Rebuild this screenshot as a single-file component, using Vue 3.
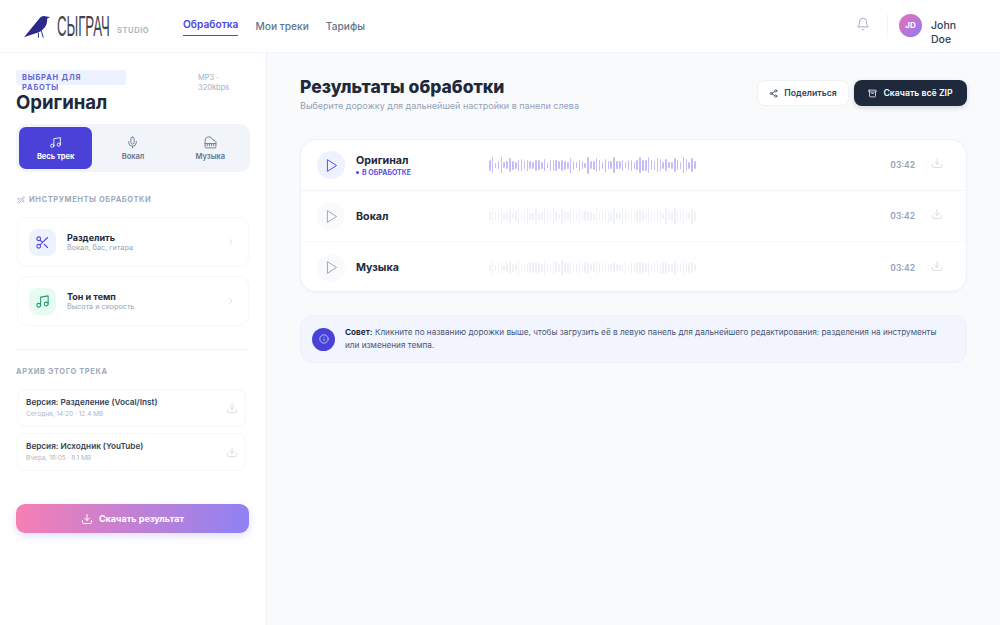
<script setup>
import { computed } from 'vue';

// small seeded generator so the waveforms stay the same on every load
function bars(seed, count) {
    let x = seed;
    const out = [];
    for (let i = 0; i < count; i++) {
        x = (x * 9301 + 49297) % 233280;
        const r = x / 233280;
        out.push(Math.round(5 + r * 7 + (i % 3 === 1 ? 5 : 0)));
    }
    return out;
}

const tabs = [
    { label: 'Весь трек', icon: 'i-music', active: true },
    { label: 'Вокал', icon: 'i-mic' },
    { label: 'Музыка', icon: 'i-piano' }
];

const tools = [
    { title: 'Разделить', sub: 'Вокал, бас, гитара', icon: 'i-scissors', tone: 'violet' },
    { title: 'Тон и темп', sub: 'Высота и скорость', icon: 'i-music', tone: 'green' }
];

const archive = [
    { title: 'Версия: Разделение (Vocal/Inst)', sub: 'Сегодня, 14:20 · 12.4 MB' },
    { title: 'Версия: Исходник (YouTube)', sub: 'Вчера, 18:05 · 8.1 MB' }
];

const tracks = computed(() => [
    { name: 'Оригинал', active: true, wave: bars(17, 72) },
    { name: 'Вокал', active: false, wave: bars(431, 72) },
    { name: 'Музыка', active: false, wave: bars(902, 72) }
]);
</script>

<template>
    <svg class="defs" aria-hidden="true">
        <symbol id="i-music" viewBox="0 0 24 24"><path d="M9 18V5l12-2v13" /><circle cx="6" cy="18" r="3" /><circle cx="18" cy="16" r="3" /></symbol>
        <symbol id="i-mic" viewBox="0 0 24 24"><path d="M12 2a3 3 0 0 0-3 3v7a3 3 0 0 0 6 0V5a3 3 0 0 0-3-3Z" /><path d="M19 10v2a7 7 0 0 1-14 0v-2" /><path d="M12 19v3" /></symbol>
        <symbol id="i-piano" viewBox="0 0 24 24"><path d="M18.5 8c-1.4 0-2.6-.8-3.2-2A6.87 6.87 0 0 0 2 9v11a2 2 0 0 0 2 2h16a2 2 0 0 0 2-2v-8.5C22 9.6 20.4 8 18.5 8" /><path d="M2 14h20M6 14v4M10 14v4M14 14v4M18 14v4" /></symbol>
        <symbol id="i-scissors" viewBox="0 0 24 24"><circle cx="6" cy="6" r="3" /><path d="M8.12 8.12 12 12M20 4 8.12 15.88" /><circle cx="6" cy="18" r="3" /><path d="M14.8 14.8 20 20" /></symbol>
        <symbol id="i-chevron" viewBox="0 0 24 24"><path d="m9 18 6-6-6-6" /></symbol>
        <symbol id="i-download" viewBox="0 0 24 24"><path d="M21 15v4a2 2 0 0 1-2 2H5a2 2 0 0 1-2-2v-4" /><path d="m7 10 5 5 5-5M12 15V3" /></symbol>
        <symbol id="i-bell" viewBox="0 0 24 24"><path d="M6 8a6 6 0 0 1 12 0c0 7 3 9 3 9H3s3-2 3-9" /><path d="M10.3 21a1.94 1.94 0 0 0 3.4 0" /></symbol>
        <symbol id="i-share" viewBox="0 0 24 24"><circle cx="18" cy="5" r="3" /><circle cx="6" cy="12" r="3" /><circle cx="18" cy="19" r="3" /><path d="m8.59 13.51 6.83 3.98M15.41 6.51l-6.82 3.98" /></symbol>
        <symbol id="i-archive" viewBox="0 0 24 24"><rect x="2" y="3" width="20" height="5" rx="1" /><path d="M4 8v11a2 2 0 0 0 2 2h12a2 2 0 0 0 2-2V8M10 12h4" /></symbol>
        <symbol id="i-play" viewBox="0 0 24 24"><path d="M6 3 20 12 6 21Z" /></symbol>
        <symbol id="i-info" viewBox="0 0 24 24"><circle cx="12" cy="12" r="10" /><path d="M12 16v-4M12 8h.01" /></symbol>
        <symbol id="i-wand" viewBox="0 0 24 24"><path d="M21.6 3.6 20.4 2.4a1.2 1.2 0 0 0-1.7 0L2.4 18.6a1.2 1.2 0 0 0 0 1.7l1.3 1.3a1.2 1.2 0 0 0 1.7 0L21.6 5.400a1.2 1.2 0 0 0 0-1.800Z" /><path d="m14 7 3 3M5 6v4M19 14v4M3 8h4M17 16h4" /></symbol>
    </svg>

    <div class="page">
        <header class="topbar">
            <div class="logo">
                <svg class="raven" viewBox="0 0 28 24">
                    <path d="M0 22.500 17 2Q20 0 23 1L27 1.500 24 3.500Q24.500 9 21 13 18 17 14 18L9 19.500Z" />
                    <path class="legs" d="M15 18v5M18 16l2 7" />
                </svg>
                <span class="logo-name"><span>СЫГРАЧ</span></span>
                <span class="logo-sub">STUDIO</span>
            </div>
            <nav class="nav">
                <a class="active">Обработка</a>
                <a>Мои треки</a>
                <a>Тарифы</a>
            </nav>
            <div class="account">
                <svg class="ic bell"><use href="#i-bell" /></svg>
                <div class="vline"></div>
                <div class="avatar">JD</div>
                <div class="username">John<br>Doe</div>
            </div>
        </header>

        <div class="body">
            <aside class="side">
                <div class="selected">
                    <div class="badge">ВЫБРАН ДЛЯ РАБОТЫ</div>
                    <div class="format">MP3 · 320kbps</div>
                </div>
                <h2 class="selected-name">Оригинал</h2>

                <div class="tabs">
                    <div v-for="tab in tabs" :key="tab.label" class="tab" :class="{ active: tab.active }">
                        <svg class="ic"><use :href="'#' + tab.icon" /></svg>
                        <span>{{ tab.label }}</span>
                    </div>
                </div>

                <div class="section-label tools-label">
                    <svg class="ic wand"><use href="#i-wand" /></svg>
                    ИНСТРУМЕНТЫ ОБРАБОТКИ
                </div>

                <div class="tools">
                    <div v-for="tool in tools" :key="tool.title" class="tool">
                        <div class="tool-icon" :class="tool.tone">
                            <svg class="ic"><use :href="'#' + tool.icon" /></svg>
                        </div>
                        <div class="tool-text">
                            <div class="tool-title">{{ tool.title }}</div>
                            <div class="tool-sub">{{ tool.sub }}</div>
                        </div>
                        <svg class="ic chevron"><use href="#i-chevron" /></svg>
                    </div>
                </div>

                <div class="hline"></div>

                <div class="section-label">АРХИВ ЭТОГО ТРЕКА</div>

                <div class="archive">
                    <div v-for="item in archive" :key="item.title" class="archive-item">
                        <div class="archive-text">
                            <div class="archive-title">{{ item.title }}</div>
                            <div class="archive-sub">{{ item.sub }}</div>
                        </div>
                        <svg class="ic dl"><use href="#i-download" /></svg>
                    </div>
                </div>

                <button class="result-btn">
                    <svg class="ic"><use href="#i-download" /></svg>
                    Скачать результат
                </button>
            </aside>

            <main class="main">
                <div class="main-head">
                    <div>
                        <h1>Результаты обработки</h1>
                        <p>Выберите дорожку для дальнейшей настройки в панели слева</p>
                    </div>
                    <div class="actions">
                        <button class="btn share">
                            <svg class="ic"><use href="#i-share" /></svg>
                            Поделиться
                        </button>
                        <button class="btn zip">
                            <svg class="ic"><use href="#i-archive" /></svg>
                            Скачать всё ZIP
                        </button>
                    </div>
                </div>

                <div class="tracks">
                    <div v-for="track in tracks" :key="track.name" class="track" :class="{ active: track.active }">
                        <div class="play">
                            <svg class="ic"><use href="#i-play" /></svg>
                        </div>
                        <div class="track-info">
                            <div class="track-name">{{ track.name }}</div>
                            <div v-if="track.active" class="track-state"><i></i>В ОБРАБОТКЕ</div>
                        </div>
                        <div class="wave">
                            <span v-for="(h, i) in track.wave" :key="i" :style="{ height: h + 'px' }"></span>
                        </div>
                        <div class="time">03:42</div>
                        <svg class="ic dl"><use href="#i-download" /></svg>
                    </div>
                </div>

                <div class="tip">
                    <div class="tip-icon">
                        <svg class="ic"><use href="#i-info" /></svg>
                    </div>
                    <p><b>Совет:</b> Кликните по названию дорожки выше, чтобы загрузить её в левую панель для дальнейшего редактирования: разделения на инструменты или изменения темпа.</p>
                </div>
            </main>
        </div>
    </div>
</template>

<style>
html, body {
    margin: 0;
    background: #fff;
}
</style>

<style scoped>
.defs {
    display: none;
}

.ic {
    display: block;
    width: 12px;
    height: 12px;
    fill: none;
    stroke: currentColor;
    stroke-width: 2;
    stroke-linecap: round;
    stroke-linejoin: round;
    flex: none;
}

.page {
    width: 1000px;
    height: 625px;
    overflow: hidden;
    display: flex;
    flex-direction: column;
    font-family: Inter, "Noto Sans", sans-serif;
    color: #1e293b;
    background: #fff;
}

/* top bar */
.topbar {
    height: 52px;
    flex: none;
    display: flex;
    align-items: center;
    padding: 0 45px 0 24px;
    border-bottom: 1px solid #f1f5f9;
    box-sizing: content-box;
}

.logo {
    display: flex;
    align-items: center;
    width: 159px;
}

.raven {
    width: 27px;
    height: 24px;
    fill: #2b2a8c;
    margin-top: 1px;
}

.legs {
    fill: none;
    stroke: #2b2a8c;
    stroke-width: 1;
}

.logo-name {
    width: 53px;
    margin-left: 6px;
    font-family: "Liberation Sans", sans-serif;
    font-size: 30px;
    color: #3f4450;
    line-height: 26px;
}

.logo-name span {
    display: inline-block;
    transform: scaleX(0.44);
    transform-origin: left center;
    white-space: nowrap;
}

.logo-sub {
    margin: 9px 0 0 7px;
    font-size: 7.500px;
    font-weight: 600;
    letter-spacing: 0.6px;
    color: #a3afc0;
}

.nav {
    display: flex;
    gap: 17px;
    font-size: 10.200px;
    font-weight: 500;
    color: #64748b;
}

.nav a {
    padding: 3px 0 3px;
    border-bottom: 1px solid transparent;
}

.nav a.active {
    color: #4f46e5;
    font-weight: 600;
    border-bottom-color: #4f46e5;
    margin-top: -2px;
    padding-bottom: 2px;
}

.account {
    margin-left: auto;
    display: flex;
    align-items: center;
}

.bell {
    width: 14px;
    height: 14px;
    color: #94a3b8;
    stroke-width: 1.5;
    margin-top: -4px;
    margin-left: 1px;
}

.vline {
    width: 1px;
    height: 24px;
    background: #f1f5f9;
    margin: 0 11px 0 17px;
}

.avatar {
    width: 23px;
    height: 23px;
    border-radius: 50%;
    background: linear-gradient(135deg, #ec6fb6, #8b7cf6);
    color: #fff;
    font-size: 8px;
    font-weight: 700;
    display: flex;
    align-items: center;
    justify-content: center;
    margin-top: -2px;
}

.username {
    margin-left: 9px;
    width: 24px;
    font-size: 10.500px;
    font-weight: 500;
    line-height: 14px;
    color: #334155;
    padding-top: 14px;
}

.body {
    flex: 1;
    display: flex;
    min-height: 0;
}

/* sidebar */
.side {
    width: 267px;
    flex: none;
    box-sizing: border-box;
    border-right: 1px solid #eef2f7;
    padding: 17px 16px 0;
}

.selected {
    display: flex;
    height: 15px;
}

.badge {
    width: 110px;
    height: 15px;
    flex: none;
    box-sizing: border-box;
    padding: 3px 30px 0 6px;
    background: #eef2ff;
    border-radius: 3px;
    font-size: 7.500px;
    font-weight: 700;
    letter-spacing: 0.8px;
    line-height: 10px;
    color: #6366d8;
}

.format {
    width: 40px;
    margin-left: 72px;
    font-size: 7.500px;
    line-height: 10px;
    color: #a3afc0;
    padding-top: 3px;
}

.selected-name {
    margin: 7px 0 0;
    font-size: 18.600px;
    line-height: 20px;
    font-weight: 700;
    color: #1e293b;
}

.tabs {
    margin-top: 12px;
    height: 48px;
    box-sizing: border-box;
    padding: 3px;
    display: flex;
    gap: 4px;
    background: #f1f5f9;
    border-radius: 10px;
    width: 234px;
}

.tab {
    flex: 1;
    display: flex;
    flex-direction: column;
    align-items: center;
    justify-content: center;
    gap: 3px;
    border-radius: 7px;
    font-size: 7.500px;
    font-weight: 600;
    color: #64748b;
}

.tab .ic {
    width: 13px;
    height: 13px;
    stroke-width: 1.6;
}

.tab.active {
    background: #4a42d8;
    color: #fff;
    font-weight: 700;
}

.section-label {
    font-size: 7.500px;
    font-weight: 700;
    letter-spacing: 0.6px;
    color: #a0aabd;
    display: flex;
    align-items: center;
    gap: 4px;
    line-height: 10px;
}

.tools-label {
    margin: 23px 0 0 1px;
}

.wand {
    width: 8px;
    height: 8px;
    color: #a5a0f0;
}

.tools {
    margin: 12px 0 0 1px;
    display: flex;
    flex-direction: column;
    gap: 9px;
    width: 232px;
}

.tool {
    height: 50px;
    box-sizing: border-box;
    border: 1px solid #f5f7fa;
    border-radius: 10px;
    display: flex;
    align-items: center;
    padding: 0 12px 0 11px;
    background: #fff;
}

.tool-icon {
    width: 27px;
    height: 27px;
    border-radius: 8px;
    display: flex;
    align-items: center;
    justify-content: center;
}

.tool-icon .ic {
    width: 15px;
    height: 15px;
    stroke-width: 1.7;
}

.tool-icon.violet {
    background: #eef2ff;
    color: #4f46e5;
}

.tool-icon.green {
    background: #e8fbf3;
    color: #1f9d6b;
}

.tool-text {
    margin-left: 11px;
    flex: 1;
}

.tool-title {
    font-size: 9px;
    font-weight: 700;
    line-height: 10px;
    color: #1e293b;
}

.tool-sub {
    font-size: 7.300px;
    line-height: 9px;
    color: #94a3b8;
}

.chevron {
    width: 10px;
    height: 10px;
    color: #cbd5e1;
}

.hline {
    height: 1px;
    background: #f1f5f9;
    margin: 23px 0 17px;
}

.archive {
    margin: 12px 0 0 1px;
    display: flex;
    flex-direction: column;
    gap: 6px;
    width: 229px;
}

.archive-item {
    height: 38px;
    box-sizing: border-box;
    border: 1px solid #f5f7fa;
    border-radius: 8px;
    display: flex;
    align-items: center;
    padding: 0 7px 0 8px;
}

.archive-text {
    flex: 1;
}

.archive-title {
    font-size: 8.200px;
    font-weight: 600;
    line-height: 11px;
    color: #334155;
}

.archive-sub {
    font-size: 6.500px;
    line-height: 10px;
    margin-top: 1px;
    color: #b0b8c4;
}

.dl {
    color: #cbd5e1;
    stroke-width: 1.6;
}

.result-btn {
    margin-top: 33px;
    width: 233px;
    height: 29px;
    border: 0;
    border-radius: 9px;
    background: linear-gradient(90deg, #f57fb4, #8f82f3);
    box-shadow: 0 3px 8px rgba(139, 124, 246, 0.25);
    color: #fff;
    font-family: inherit;
    font-size: 9px;
    font-weight: 700;
    display: flex;
    align-items: center;
    justify-content: center;
    gap: 6px;
}

/* main column */
.main {
    flex: 1;
    background: #f8fafc;
    padding: 23px 33px 0;
    min-width: 0;
}

.main-head {
    display: flex;
    justify-content: space-between;
    align-items: flex-start;
}

.main-head h1 {
    margin: 0;
    font-size: 17.500px;
    line-height: 22px;
    font-weight: 800;
    color: #1e293b;
}

.main-head p {
    margin: 2px 0 0;
    font-size: 9px;
    line-height: 12px;
    color: #94a3b8;
}

.actions {
    display: flex;
    align-items: center;
    gap: 5px;
    margin-top: 4px;
}

.btn {
    height: 26px;
    box-sizing: border-box;
    border-radius: 8px;
    font-family: inherit;
    font-size: 8.700px;
    font-weight: 600;
    display: flex;
    align-items: center;
    justify-content: center;
    gap: 6px;
    padding: 0;
}

.btn .ic {
    width: 9px;
    height: 9px;
}

.share {
    width: 92px;
    background: #fff;
    border: 1px solid #eef2f7;
    color: #334155;
}

.zip {
    width: 113px;
    background: #1e293b;
    border: 0;
    color: #fff;
    box-shadow: 0 2px 5px rgba(15, 23, 42, 0.15);
}

.tracks {
    margin-top: 27px;
    height: 153px;
    box-sizing: border-box;
    background: #fff;
    border: 1px solid #eef2f7;
    border-radius: 16px;
    overflow: hidden;
    box-shadow: 0 1px 3px rgba(15, 23, 42, 0.03);
}

.track {
    height: 51px;
    display: flex;
    align-items: center;
    padding: 0 23px 0 16px;
    border-bottom: 1px solid #f5f7fa;
    box-sizing: border-box;
}

.track:last-child {
    border-bottom: 0;
}

.track.active {
    border-bottom-color: #f1f5f9;
}

.play {
    width: 28px;
    height: 28px;
    border-radius: 50%;
    background: #f8fafc;
    color: #94a3b8;
    display: flex;
    align-items: center;
    justify-content: center;
}

.play .ic {
    width: 15px;
    height: 15px;
    stroke-width: 1.5;
}

.track.active .play {
    background: #eef2ff;
    color: #4f46e5;
}

.track-info {
    width: 133px;
    margin-left: 11px;
}

.track.active .track-info {
    padding-top: 1px;
}

.track-name {
    font-size: 10.700px;
    font-weight: 700;
    line-height: 13px;
    color: #1e293b;
}

.track-state {
    display: flex;
    align-items: center;
    gap: 3px;
    font-size: 7px;
    font-weight: 700;
    line-height: 11px;
    color: #5b52e0;
}

.track-state i {
    width: 3px;
    height: 3px;
    border-radius: 50%;
    background: #4f46e5;
}

.wave {
    width: 207px;
    height: 20px;
    display: flex;
    align-items: center;
    justify-content: space-between;
}

.wave span {
    width: 1.500px;
    border-radius: 1px;
    background: #eef1f5;
}

.track.active .wave span {
    background: #c4bff7;
}

.time {
    margin-left: auto;
    font-size: 8.500px;
    font-weight: 600;
    color: #94a3b8;
}

.track .dl {
    margin-left: 16px;
    margin-top: -4px;
}

.tip {
    margin-top: 23px;
    height: 48px;
    box-sizing: border-box;
    background: #f2f5fe;
    border: 1px solid #eef1fb;
    border-radius: 12px;
    display: flex;
    align-items: center;
    padding: 0 14px 0 11px;
    gap: 10px;
}

.tip-icon {
    width: 23px;
    height: 23px;
    flex: none;
    border-radius: 50%;
    background: #4a42d8;
    color: #c7d2fe;
    display: flex;
    align-items: center;
    justify-content: center;
}

.tip-icon .ic {
    width: 10px;
    height: 10px;
}

.tip p {
    margin: 0;
    font-size: 8.200px;
    line-height: 13px;
    color: #4a5578;
}

.tip b {
    color: #1e293b;
    font-weight: 700;
}
</style>
